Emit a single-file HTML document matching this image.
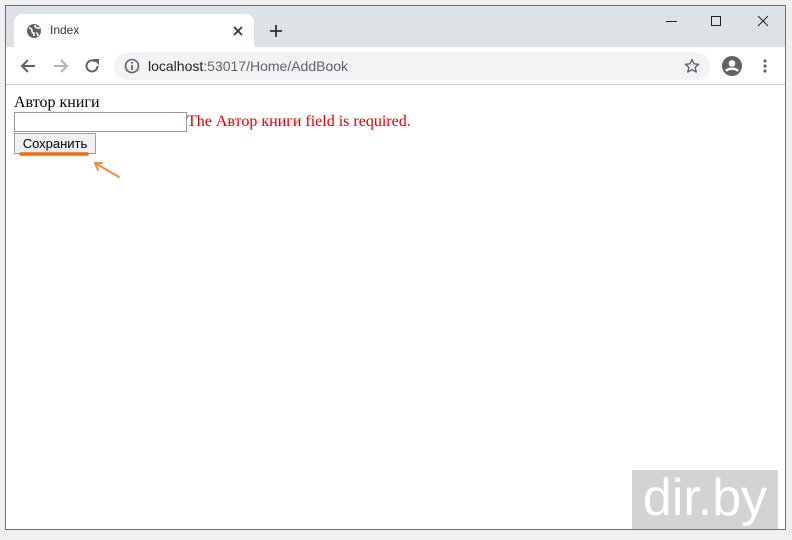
<!DOCTYPE html>
<html><head><meta charset="utf-8"><style>
body{margin:0;width:792px;height:540px;background:#f0f0f0;position:relative;overflow:hidden;font-family:"Liberation Sans",sans-serif}
.win{position:absolute;left:5px;top:5px;width:781px;height:525px;border:1px solid #6f6f6f;background:#fff;box-sizing:border-box;overflow:hidden}
.strip{position:absolute;left:0;top:0;right:0;height:41px;background:#dee1e6}
.tab{position:absolute;left:8px;top:8px;width:240px;height:33px;background:#fff;border-radius:8px 8px 0 0}
.tb{position:absolute;left:0;top:41px;right:0;height:37px;background:#fff;border-bottom:1px solid #ccc}
.omni{position:absolute;left:108px;top:5px;width:596px;height:28px;background:#f1f3f4;border-radius:14px}
.abs{position:absolute;white-space:nowrap}
.page{position:absolute;left:8px;top:88px;width:700px;font-family:"Liberation Serif",serif;font-size:16px;color:#000}
</style></head><body>
<div class="win">
<div class="strip"></div>
<div class="tab">
<svg class="abs" style="left:12px;top:9px" width="16" height="16" viewBox="0 0 16 16"><circle cx="8" cy="8" r="7" fill="#5f6368"/><path d="M3 5c2 0 3 1 3 3s1 2 2 2v3M9 2c0 2 1 3 3 3h2M10 10c1 0 2 1 2 3" stroke="#fff" stroke-width="1.6" fill="none"/></svg>
<span class="abs" style="left:36px;top:9px;font-size:12px;color:#333">Index</span>
<svg class="abs" style="left:218px;top:11px" width="12" height="12"><path d="M2 2l8 8M10 2l-8 8" stroke="#333" stroke-width="1.8"/></svg>
</div>
<svg class="abs" style="left:263px;top:18px" width="14" height="14"><path d="M7 1v12M1 7h12" stroke="#333" stroke-width="1.8"/></svg>
<svg class="abs" style="left:660px;top:8px" width="120" height="14"><path d="M0 7.5h11" stroke="#222"/><rect x="45.5" y="2.5" width="9" height="9" fill="none" stroke="#222"/><path d="M92 2l10 10M102 2l-10 10" stroke="#222"/></svg>
<div class="tb">
<svg class="abs" style="left:14px;top:11px" width="16" height="16"><path d="M15 8H2M8 2L2 8l6 6" stroke="#5f6368" stroke-width="2" fill="none"/></svg>
<svg class="abs" style="left:47px;top:11px" width="16" height="16"><path d="M1 8h13M8 2l6 6-6 6" stroke="#b0b3b8" stroke-width="2" fill="none"/></svg>
<svg class="abs" style="left:78px;top:11px" width="16" height="16"><path d="M13.5 8A5.5 5.5 0 1 1 11.5 3.7" stroke="#5f6368" stroke-width="2" fill="none"/><path d="M9 1h6v6z" fill="#5f6368"/></svg>
<div class="omni">
<svg class="abs" style="left:10px;top:6px" width="16" height="16"><circle cx="8" cy="8" r="6.5" stroke="#5f6368" stroke-width="1.6" fill="none"/><path d="M8 7v5M8 4v1.6" stroke="#5f6368" stroke-width="1.8"/></svg>
<span class="abs" style="left:34px;top:6px;font-size:14px;color:#202124">localhost<span style="color:#5f6368">:53017/Home/AddBook</span></span>
<svg class="abs" style="left:570px;top:6px" width="16" height="16"><path d="M8 1.5l2 4.3 4.6.5-3.4 3.1 1 4.6L8 11.6 3.8 14l1-4.6L1.4 6.3 6 5.8z" stroke="#5f6368" stroke-width="1.4" fill="none" stroke-linejoin="round"/></svg>
</div>
<svg class="abs" style="left:716px;top:9px" width="20" height="20"><circle cx="10" cy="10" r="10" fill="#5f6368"/><circle cx="10" cy="7.5" r="3.3" fill="#fff"/><path d="M4 15c2-3 10-3 12 0" stroke="#fff" stroke-width="2.5" fill="none"/></svg>
<svg class="abs" style="left:756px;top:11px" width="6" height="16"><circle cx="3" cy="3" r="1.6" fill="#5f6368"/><circle cx="3" cy="8" r="1.6" fill="#5f6368"/><circle cx="3" cy="13" r="1.6" fill="#5f6368"/></svg>
</div>
<div class="page">
<div style="height:18px;line-height:18px">Автор книги</div>
<div style="height:21px;position:relative"><span class="abs" style="left:0;top:0;width:173px;height:20px;border:1px solid #999;box-sizing:border-box"></span><span class="abs" style="left:173px;top:0;color:#e00000;line-height:20px">The Автор книги field is required.</span></div>
<div class="abs" style="left:0;top:39px;width:82px;height:21px;border:1px solid #a0a0a0;background:#f0f0f0;box-sizing:border-box;font-family:'Liberation Sans',sans-serif;font-size:13px;text-align:center;line-height:19px">Сохранить</div>
</div>
<svg class="abs" style="left:0;top:140px" width="130" height="40"><path d="M15 8h66" stroke="#f06a10" stroke-width="3.5" stroke-linecap="round"/><path d="M113 31L89 17M89 17l3 7M89 17l7 0" stroke="#f08a40" stroke-width="2" fill="none" stroke-linecap="round"/></svg>
<div class="abs" style="left:626px;top:464px;width:146px;height:62px;background:#d3d3d3;color:#fff;font-size:52px;line-height:56px;text-align:center">dir.by</div>
</div>
</body></html>
